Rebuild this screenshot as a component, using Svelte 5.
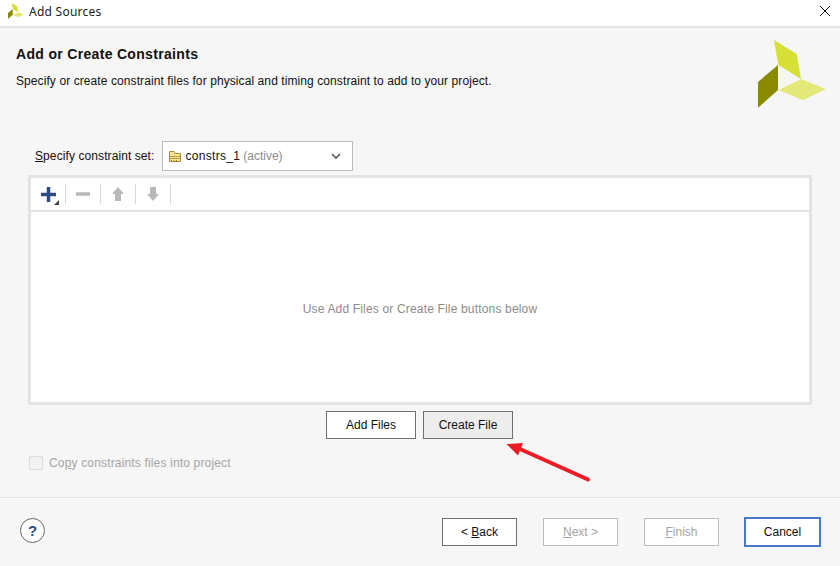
<script>
  const actions = [
    { key: 'N', rest: 'ext >' },
    { key: 'F', rest: 'inish' },
  ];
</script>

<div class="dialog">
  <header class="titlebar">
    <svg class="app-icon" width="16" height="16" viewBox="0 0 68 68">
      <path d="M16 0 L38.700 14 L43 39 L20.300 25 Z" fill="#d6df36" />
      <path d="M20 25 V50 L0 67.700 V42 Z" fill="#8a8a00" />
      <path d="M43 39 L67.700 49 L45 60.300 L20.700 50 Z" fill="#e3e878" />
    </svg>
    <span class="title">Add Sources</span>
    <svg class="close" width="12" height="12" viewBox="0 0 12 12">
      <path d="M1 1 L11 11 M11 1 L1 11" stroke="#111" stroke-width="1" fill="none" />
    </svg>
  </header>

  <section class="intro">
    <div>
      <h1>Add or Create Constraints</h1>
      <p>Specify or create constraint files for physical and timing constraint to add to your project.</p>
    </div>
    <svg class="logo" width="68" height="68" viewBox="0 0 68 68">
      <path d="M16 0 L38.700 14 L43 39 L20.300 25 Z" fill="#d6df36" />
      <path d="M20 25 V50 L0 67.700 V42 Z" fill="#8a8a00" />
      <path d="M43 39 L67.700 49 L45 60.300 L20.700 50 Z" fill="#e3e878" />
    </svg>
  </section>

  <main class="content">
    <div class="set-row">
      <span class="set-label"><u>S</u>pecify constraint set:</span>
      <div class="combo">
        <svg width="12" height="11" viewBox="0 0 12 11">
          <path d="M0.500 10.500 V0.500 H5 L6 2.500 H11.500 V10.500 Z" fill="#f7e39c" stroke="#a98a2c" />
          <path d="M1 5.500 H11 M1 7.500 H11" stroke="#b89a3e" />
          <path d="M2.500 9 V10 M5 9 V10 M7.500 9 V10" stroke="#a98a2c" />
        </svg>
        <span class="combo-name">constrs_1</span>
        <span class="combo-state">(active)</span>
        <svg class="chevron" width="10" height="6" viewBox="0 0 10 6">
          <path d="M1 1 L5 5 L9 1" stroke="#555" stroke-width="1.600" fill="none" />
        </svg>
      </div>
    </div>

    <div class="table-panel">
      <div class="toolbar">
        <div class="tool add">
          <svg width="15" height="15" viewBox="0 0 15 15">
            <path d="M7.500 0 V15 M0 7.500 H15" stroke="#2f4a80" stroke-width="3.500" fill="none" />
          </svg>
          <span class="corner"></span>
        </div>
        <div class="tool">
          <svg width="16" height="16" viewBox="0 0 16 16">
            <path d="M1 8 H15" stroke="#b8b8b8" stroke-width="3.500" fill="none" />
          </svg>
        </div>
        <div class="tool">
          <svg width="14" height="16" viewBox="0 0 14 16">
            <path d="M7 1 L13 8 H10 V15 H4 V8 H1 Z" fill="#b8b8b8" />
          </svg>
        </div>
        <div class="tool">
          <svg width="14" height="16" viewBox="0 0 14 16">
            <path d="M7 15 L13 8 H10 V1 H4 V8 H1 Z" fill="#b8b8b8" />
          </svg>
        </div>
      </div>
      <div class="table-body">Use Add Files or Create File buttons below</div>
    </div>

    <div class="file-actions">
      <button class="btn">Add Files</button>
      <button class="btn hover">Create File</button>
    </div>

    <label class="copy">
      <span class="checkbox"></span>
      <span>Co<u>p</u>y constraints files into project</span>
    </label>
  </main>

  <footer class="footer">
    <div class="help">?</div>
    <div class="nav">
      <button class="btn wide">&lt; <u>B</u>ack</button>
      {#each actions as a}
        <button class="btn wide disabled"><u>{a.key}</u>{a.rest}</button>
      {/each}
      <button class="btn cancel">Cancel</button>
    </div>
  </footer>

  <svg class="arrow" width="90" height="44" viewBox="0 0 90 44">
    <path d="M82 37.500 L14 7" stroke="#ee1c25" stroke-width="4" stroke-linecap="round" fill="none" />
    <path d="M0.500 2 L17 1 L12 13.500 Z" fill="#ee1c25" />
  </svg>
</div>

<style>
  :global(body) {
    background: #f6f6f6;
  }

  .dialog {
    position: relative;
    width: 840px;
    height: 566px;
    overflow: hidden;
    background: #f6f6f6;
    color: #111;
    font-family: 'Liberation Sans', Arial, sans-serif;
    font-size: 12px;
  }

  .titlebar {
    box-sizing: border-box;
    height: 28px;
    display: flex;
    align-items: center;
    padding: 0 9px 4px 8px;
    background: #fff;
    border-bottom: 2px solid #e4e4e4;
  }
  .title {
    margin-left: 5px;
    font-family: 'Noto Sans', sans-serif;
    font-size: 12px;
    letter-spacing: 0.25px;
    color: #222;
  }
  .close {
    margin-left: auto;
  }

  .intro {
    box-sizing: border-box;
    height: 113px;
    display: flex;
    justify-content: space-between;
    padding: 12px 14px 0 16px;
  }
  h1 {
    margin: 6px 0 0;
    font-size: 14px;
    line-height: 17px;
    letter-spacing: 0.32px;
  }
  .intro p {
    margin: 11px 0 0;
    line-height: 14px;
    letter-spacing: 0.087px;
  }

  .content {
    padding: 0 28px;
  }

  .set-row {
    display: flex;
    align-items: center;
    gap: 8px;
    padding-left: 7px;
    height: 30px;
  }
  .set-label {
    letter-spacing: 0.09px;
  }
  .combo {
    box-sizing: border-box;
    width: 191px;
    height: 30px;
    display: flex;
    align-items: center;
    gap: 3px;
    padding: 0 11px 0 6px;
    background: #fff;
    border: 1px solid #bcbcbc;
  }
  .combo svg:first-child {
    margin-right: 1px;
  }
  .combo-name {
    letter-spacing: 0.3px;
  }
  .combo-state {
    color: #8c8c8c;
  }
  .chevron {
    margin-left: auto;
  }

  .table-panel {
    box-sizing: border-box;
    height: 230px;
    margin-top: 4px;
    display: flex;
    flex-direction: column;
    background: #fff;
    border: 3px solid #e4e4e4;
  }
  .toolbar {
    box-sizing: border-box;
    height: 34px;
    display: flex;
    align-items: center;
    border-bottom: 2px solid #e4e4e4;
  }
  .tool {
    position: relative;
    width: 35px;
    height: 20px;
    display: flex;
    align-items: center;
    justify-content: center;
    border-right: 1px solid #d8d8d8;
    box-sizing: border-box;
  }
  .corner {
    position: absolute;
    right: 6px;
    bottom: -1px;
    width: 0;
    height: 0;
    border-left: 5px solid transparent;
    border-bottom: 5px solid #444;
  }
  .table-body {
    flex: 1;
    display: flex;
    align-items: center;
    justify-content: center;
    color: #8c8c8c;
    padding-top: 3px;
    letter-spacing: 0.17px;
  }

  .file-actions {
    display: flex;
    justify-content: center;
    gap: 7px;
    margin-top: 6px;
    padding-right: 1px;
  }

  .btn {
    box-sizing: border-box;
    width: 90px;
    height: 28px;
    padding: 0;
    background: #fff;
    border: 1px solid #707070;
    color: #111;
    font-family: inherit;
    font-size: 12px;
  }
  .btn.hover {
    background: #ededed;
  }
  .btn.wide {
    width: 75px;
  }
  .btn.disabled {
    border-color: #bcbcbc;
    color: #a5a5a5;
  }
  .btn.cancel {
    width: 77px;
    height: 30px;
    margin: -1px 0;
    border: 2px solid #4a78c8;
  }

  .copy {
    display: flex;
    align-items: center;
    gap: 6px;
    margin-top: 17px;
    padding-left: 1px;
    color: #a5a5a5;
    letter-spacing: 0.16px;
  }
  .checkbox {
    box-sizing: border-box;
    width: 14px;
    height: 14px;
    background: #f2f2f2;
    border: 1px solid #dcdcdc;
    border-radius: 1px;
  }

  .footer {
    box-sizing: border-box;
    position: absolute;
    left: 0;
    right: 0;
    top: 497px;
    height: 69px;
    display: flex;
    align-items: flex-start;
    justify-content: space-between;
    padding: 20px 19px 0 20px;
    border-top: 1px solid #e4e4e4;
  }
  .help {
    box-sizing: border-box;
    width: 25px;
    height: 25px;
    display: flex;
    align-items: center;
    justify-content: center;
    background: #fff;
    border: 1px solid #666;
    border-radius: 50%;
    color: #2f4a80;
    font-size: 15px;
    font-weight: bold;
  }
  .nav {
    display: flex;
    gap: 26px;
  }
  .nav .cancel {
    margin-left: -1px;
  }

  .arrow {
    position: absolute;
    left: 506px;
    top: 442px;
  }
</style>
